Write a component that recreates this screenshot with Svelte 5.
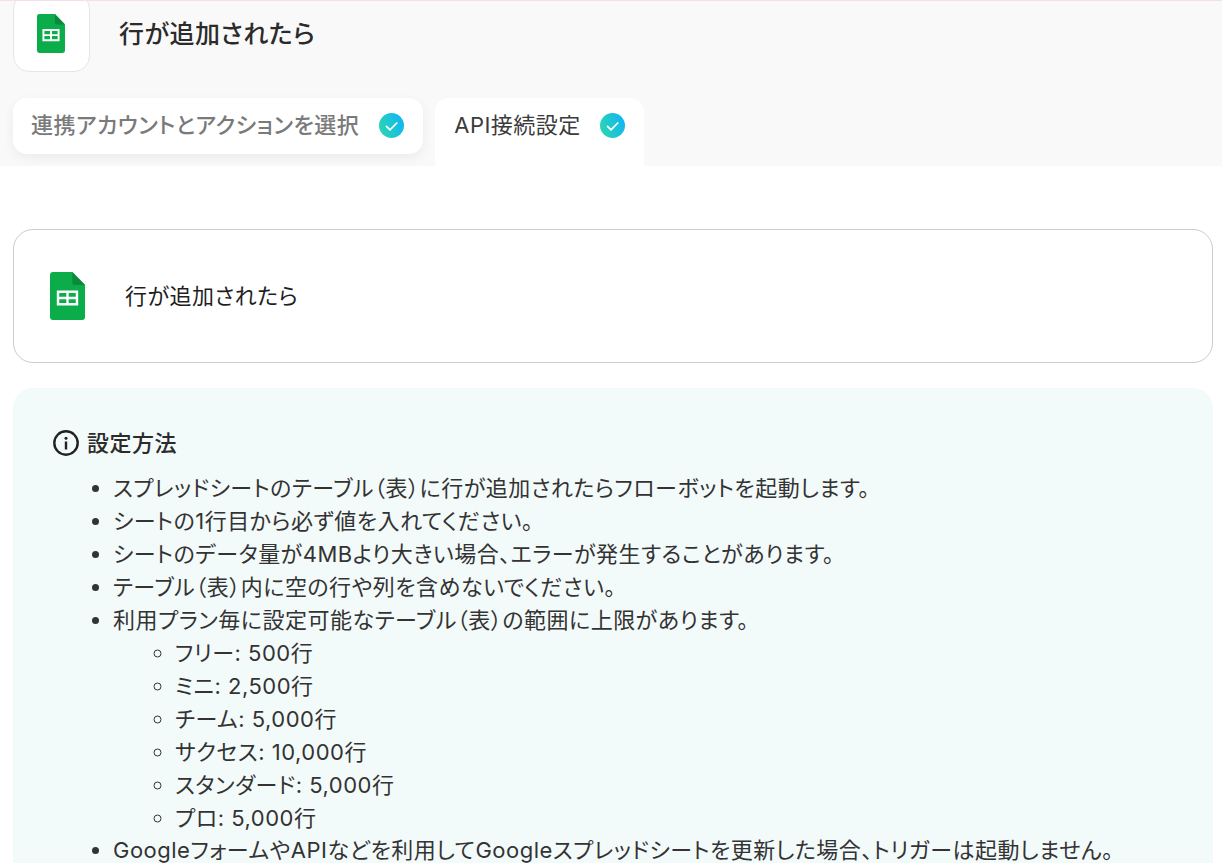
<script lang="ts">
const plans = [
  "フリー: 500行",
  "ミニ: 2,500行",
  "チーム: 5,000行",
  "サクセス: 10,000行",
  "スタンダード: 5,000行",
  "プロ: 5,000行",
];
</script>

{#snippet sheetIcon()}
  <svg viewBox="0 0 36 48" preserveAspectRatio="none" class="sheet" aria-hidden="true">
    <path d="M3 0H23L36 13V45a3 3 0 0 1-3 3H3a3 3 0 0 1-3-3V3a3 3 0 0 1 3-3Z" fill="#0bac4a" />
    <path d="M23 0L36 13H25.500A2.500 2.500 0 0 1 23 10.500Z" fill="#0a8a3a" />
    <path d="M7 18.500H29V33.500H7ZM9.500 21V24.800H16.800V21ZM19.200 21V24.800H26.500V21ZM9.500 27.200V31H16.800V27.200ZM19.200 27.200V31H26.500V27.200Z" fill="#fff" fill-rule="evenodd" />
  </svg>
{/snippet}

{#snippet check()}
  <svg viewBox="0 0 25 25" class="check" aria-hidden="true">
    <defs>
      <linearGradient id="chk" x1="0" y1="0.700" x2="1" y2="0.300">
        <stop offset="0" stop-color="#2bd6b0" />
        <stop offset="1" stop-color="#10b5f5" />
      </linearGradient>
    </defs>
    <circle cx="12.500" cy="12.500" r="12.500" fill="url(#chk)" />
    <path d="M7.500 13.300l3.500 3.500 6.800-6.800" fill="none" stroke="#fff" stroke-width="1.700" stroke-linecap="round" stroke-linejoin="round" />
  </svg>
{/snippet}

<div class="page">
  <header class="head">
    <div class="title-row">
      <div class="icon-box">{@render sheetIcon()}</div>
      <h1>行が追加されたら</h1>
    </div>
    <div class="tabs">
      <div class="tab done">連携アカウントとアクションを選択 {@render check()}</div>
      <div class="tab active">API接続設定 {@render check()}</div>
    </div>
  </header>

  <main class="body">
    <section class="card">
      <div class="card-icon">{@render sheetIcon()}</div>
      <span>行が追加されたら</span>
    </section>

    <section class="panel">
      <h2>
        <svg viewBox="0 0 26 26" class="info" aria-hidden="true">
          <circle cx="13" cy="13" r="11.700" fill="none" stroke="#222" stroke-width="2.400" />
          <circle cx="13" cy="8.300" r="1.500" fill="#222" />
          <rect x="11.800" y="11.500" width="2.400" height="8" fill="#222" />
        </svg>
        設定方法
      </h2>
      <ul>
        <li>スプレッドシートのテーブル（表）に行が追加されたらフローボットを起動します。</li>
        <li>シートの1行目から必ず値を入れてください。</li>
        <li>シートのデータ量が4MBより大きい場合、エラーが発生することがあります。</li>
        <li>テーブル（表）内に空の行や列を含めないでください。</li>
        <li>
          利用プラン毎に設定可能なテーブル（表）の範囲に上限があります。
          <ul>
            {#each plans as plan}
              <li>{plan}</li>
            {/each}
          </ul>
        </li>
        <li>GoogleフォームやAPIなどを利用してGoogleスプレッドシートを更新した場合、トリガーは起動しません。</li>
      </ul>
    </section>
  </main>
</div>

<style>
  :global(body) {
    margin: 0;
    background: #fff;
    overflow: hidden;
  }

  .page {
    height: 863px;
    overflow: hidden;
    font-family: Inter, "Noto Sans CJK JP", sans-serif;
    font-feature-settings: "palt";
    letter-spacing: 0.5px;
    color: #2b2b2b;
  }

  .head {
    height: 165px;
    background: #f9f9f9;
    border-top: 1px solid #f5dfe9;
    padding: 0 13px;
    overflow: hidden;
  }

  .title-row {
    display: flex;
    align-items: center;
    gap: 29px;
    height: 70px;
  }

  .icon-box {
    width: 75px;
    height: 77px;
    margin-top: -7px;
    background: #fff;
    border: 1px solid #e6e6e6;
    border-radius: 16px;
    display: flex;
    align-items: center;
    justify-content: center;
  }

  .icon-box .sheet {
    width: 28px;
    height: 39px;
    margin-left: -1px;
    margin-top: 1px;
  }

  h1 {
    margin: -8px 0 0;
    font-size: 25px;
    font-weight: 500;
    color: #2b2b2b;
  }

  .tabs {
    display: flex;
    gap: 12px;
    margin-top: 27px;
    align-items: flex-start;
  }

  .tab {
    display: flex;
    align-items: center;
    gap: 20px;
    height: 56px;
    padding: 0 19px 2px 18px;
    border-radius: 14px;
    background: #fff;
    font-size: 22px;
    font-weight: 500;
    box-sizing: border-box;
    line-height: 1;
  }

  .tab.done {
    color: #7a7a7a;
    box-shadow: 0 4px 12px rgba(0, 0, 0, 0.06);
  }

  .tab.active {
    height: 68px;
    gap: 19px;
    padding: 0 19px 14px 19px;
    border-radius: 14px 14px 0 0;
    color: #3b3b3b;
    font-weight: 400;
  }

  .check {
    width: 25px;
    height: 25px;
    flex: none;
  }

  .body {
    padding: 63px 9px 0 13px;
  }

  .card {
    display: flex;
    align-items: center;
    height: 134px;
    box-sizing: border-box;
    border: 1px solid #cccccc;
    border-radius: 20px;
    padding-left: 36px;
    font-size: 22px;
    color: #1f1f1f;
  }

  .card span {
    padding-bottom: 4px;
  }

  .card-icon {
    width: 75px;
    display: flex;
  }

  .card .sheet {
    width: 35px;
    height: 48px;
  }

  .panel {
    margin-top: 25px;
    background: #f3fafa;
    border-radius: 20px;
    padding: 39px 40px 40px;
    min-height: 500px;
  }

  h2 {
    display: flex;
    align-items: center;
    gap: 8px;
    margin: 0 0 13px;
    font-size: 22px;
    font-weight: 500;
    color: #2b2b2b;
    line-height: 32px;
  }

  .info {
    width: 26px;
    height: 26px;
  }

  ul {
    margin: 0;
    padding-left: 60px;
    font-size: 22px;
    line-height: 32.950px;
    color: #333;
  }

  ul ul {
    padding-left: 62px;
    list-style: circle;
  }
</style>
